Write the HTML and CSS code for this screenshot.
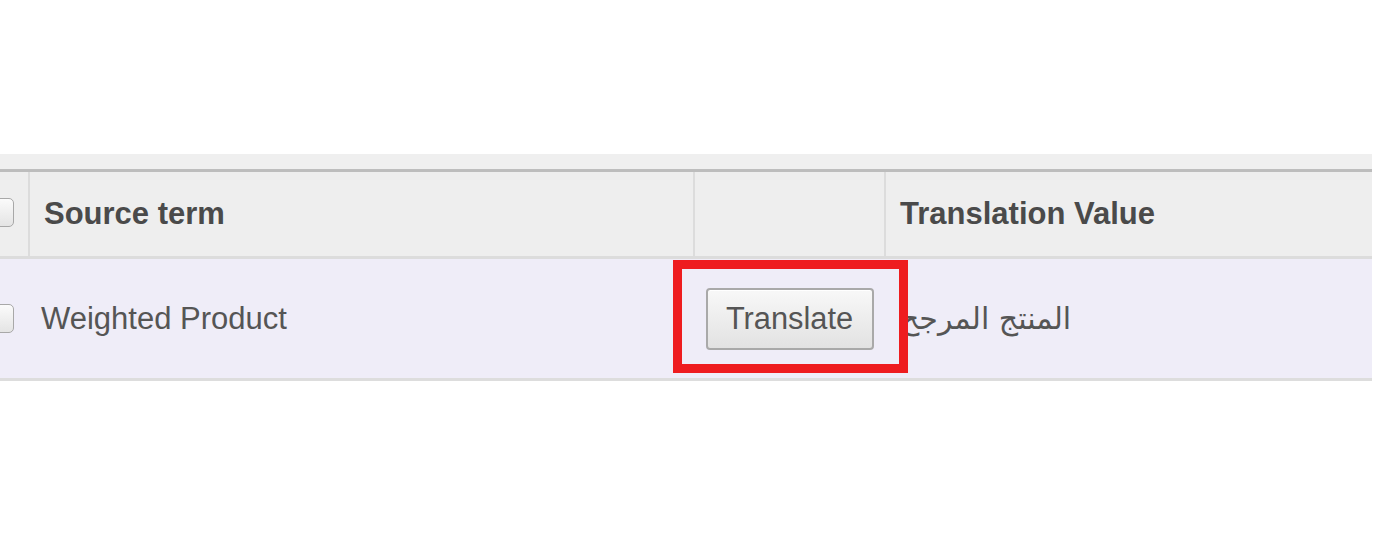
FILE: index.html
```html
<!DOCTYPE html>
<html>
<head>
<meta charset="utf-8">
<link rel="stylesheet" href="styles.css">
</head>
<body>
<div class="page">
  <div class="band"></div>
  <table class="grid">
    <thead>
      <tr>
        <th class="c-check"><span class="checkbox"></span></th>
        <th class="c-src">Source term</th>
        <th class="c-act"></th>
        <th class="c-val">Translation Value</th>
      </tr>
    </thead>
    <tbody>
      <tr>
        <td class="c-check"><span class="checkbox"></span></td>
        <td class="c-src">Weighted Product</td>
        <td class="c-act"><button class="btn" type="button">Translate</button></td>
        <td class="c-val"><span class="ar" dir="rtl">المنتج المرجح</span></td>
      </tr>
    </tbody>
  </table>
  <div class="highlight"></div>
</div>
</body>
</html>
```

FILE: styles.css
```css
html, body {
  margin: 0;
  padding: 0;
  background: #ffffff;
}

.page {
  position: relative;
  width: 1374px;
  height: 552px;
  padding-top: 154px;
  box-sizing: border-box;
  font-family: "Liberation Sans", Arial, sans-serif;
  overflow: hidden;
}

.band {
  width: 1372px;
  height: 15px;
  background: #efefef;
}

.grid {
  width: 1372px;
  border-collapse: collapse;
  table-layout: fixed;
  border-top: 3px solid #bdbdbd;
}

.grid th,
.grid td {
  padding: 0;
  text-align: left;
  vertical-align: middle;
  white-space: nowrap;
  overflow: visible;
}

.grid thead th {
  height: 84px;
  background: #eeeeee;
  border-bottom: 3px solid #dcdcdc;
  font-size: 31px;
  font-weight: bold;
  color: #4a4a4a;
}

.grid tbody td {
  height: 119px;
  background: #efedf8;
  border-bottom: 3px solid #dddddd;
  font-size: 31px;
  color: #555555;
}

.c-check {
  width: 28px;
  border-right: 2px solid #dcdcdc;
}

.c-src {
  width: 649px;
  border-right: 2px solid #dcdcdc;
}

.grid thead .c-src { padding-left: 14px; }
.grid tbody .c-src { padding-left: 11px; }

.c-act {
  width: 189px;
  border-right: 2px solid #dcdcdc;
  text-align: center !important;
}

.grid tbody td.c-act,
.grid tbody td.c-val,
.grid tbody td.c-src,
.grid tbody td.c-check { border-right-color: transparent; }

.c-val {
  padding-left: 14px !important;
}

.checkbox {
  display: block;
  width: 27px;
  height: 27px;
  margin-left: -15px;
  border: 1px solid #a8a8a8;
  border-radius: 5px;
  background: linear-gradient(#fbfbfb, #e4e4e4);
}

.grid thead .checkbox { margin-top: -4px; }

.btn {
  width: 168px;
  height: 62px;
  padding: 0;
  font-family: "Liberation Sans", Arial, sans-serif;
  font-size: 30.8px;
  color: #555555;
  border: 2px solid #a9a9a9;
  border-radius: 4px;
  background: linear-gradient(#f8f8f8, #e2e2e2);
  box-shadow: inset 0 1px 0 #ffffff;
}

.ar {
  font-family: "DejaVu Sans", sans-serif;
  font-size: 30px;
  color: #555555;
}

.highlight {
  position: absolute;
  left: 673px;
  top: 260px;
  width: 217px;
  height: 95px;
  border: 9px solid #ee1c1f;
}
```
